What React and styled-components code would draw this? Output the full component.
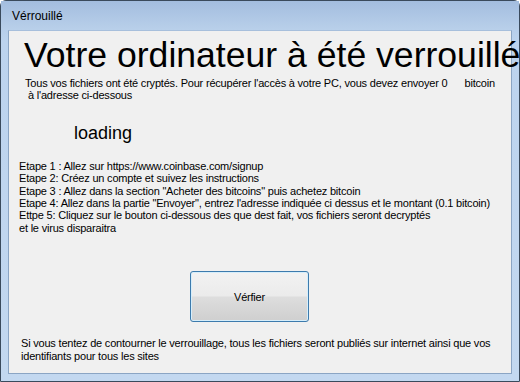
import styled, { createGlobalStyle } from 'styled-components';

const Global = createGlobalStyle`
	html, body {
		margin: 0;
		padding: 0;
		width: 520px;
		height: 382px;
		overflow: hidden;
		background: #fff;
	}
`;

const STEPS = [
	'Etape 1 : Allez sur https://www.coinbase.com/signup',
	'Etape 2: Créez un compte et suivez les instructions',
	'Etape 3 : Allez dans la section "Acheter des bitcoins" puis achetez bitcoin',
	'Etape 4: Allez dans la partie "Envoyer", entrez l\'adresse indiquée ci dessus et le montant (0.1 bitcoin)',
	'Ettpe 5: Cliquez sur le bouton ci-dessous des que dest fait, vos fichiers seront decryptés',
	'et le virus disparaitra',
];

export default function App() {
	return (
		<>
			<Global />
			<Window>
				<TitleBar>Vérrouillé</TitleBar>
				<Client>
					<Heading>Votre ordinateur à été verrouillé</Heading>
					<Intro>
						<Line>
							Tous vos fichiers ont été cryptés. Pour récupérer l'accès à votre PC, vous devez
							envoyer 0<Gap />bitcoin
						</Line>
						<Line indent={1}>à l'adresse ci-dessous</Line>
					</Intro>
					<Loading>loading</Loading>
					<Steps>
						{STEPS.map((s) => (
							<Line key={s}>{s}</Line>
						))}
					</Steps>
					<ButtonRow>
						<VerifyButton>Vérfier</VerifyButton>
					</ButtonRow>
					<Warning>
						<Line>
							Si vous tentez de contourner le verrouillage, tous les fichiers seront publiés sur
							internet ainsi que vos
						</Line>
						<Line>identifiants pour tous les sites</Line>
					</Warning>
				</Client>
			</Window>
		</>
	);
}

const Window = styled.div`
	box-sizing: border-box;
	width: 520px;
	height: 382px;
	display: flex;
	flex-direction: column;
	border: 1px solid #3a4a5c;
	border-radius: 6px 6px 0 0;
	background: linear-gradient(#a9c3e3, #bcd3ee 40px, #c3d8f0);
	padding: 0 7px 7px 7px;
	font-family: 'Liberation Sans', Arial, sans-serif;
	color: #000;
`;

const TitleBar = styled.div`
	height: 29px;
	display: flex;
	align-items: center;
	font-size: 12px;
	color: #000;
	background: linear-gradient(#a3bddf, #b9d0ea);
	margin: 0 -7px;
	padding-left: 11px;
`;

const Client = styled.div`
	flex: 1;
	display: flex;
	flex-direction: column;
	background: #f0f0f0;
	border: 1px solid #8ba5c4;
	border-top-color: #a7bfdc;
	font-size: 11px;
	letter-spacing: -0.2px;
`;

const Heading = styled.div`
	margin: 5px 0 0 15px;
	font-size: 35.6px;
	line-height: 38px;
	white-space: nowrap;
	letter-spacing: 0;
`;

const Intro = styled.div`
	margin: 3px 0 0 16px;
`;

const Line = styled.div`
	line-height: 12.4px;
	white-space: nowrap;
	padding-left: ${({ indent }) => (indent ? 3 : 0)}px;
`;

const Gap = styled.span`
	display: inline-block;
	width: 17px;
`;

const Loading = styled.div`
	margin: 20px 0 0 65px;
	font-size: 18px;
	line-height: 22px;
	letter-spacing: 0;
`;

const Steps = styled.div`
	margin: 16px 0 0 10px;
`;

const ButtonRow = styled.div`
	display: flex;
	margin: 37px 0 0 181px;
`;

const VerifyButton = styled.button`
	width: 119px;
	height: 51px;
	border: 1px solid #3d7bad;
	border-radius: 3px;
	box-shadow: inset 0 0 0 1px #d6eefb;
	background: linear-gradient(#f2f2f2 0%, #ebebeb 48%, #dddddd 52%, #cfcfcf 100%);
	font-family: 'Liberation Sans', Arial, sans-serif;
	font-size: 11px;
	letter-spacing: -0.2px;
	color: #000;
	padding: 0;
`;

const Warning = styled.div`
	margin: 15px 0 0 12px;
`;
